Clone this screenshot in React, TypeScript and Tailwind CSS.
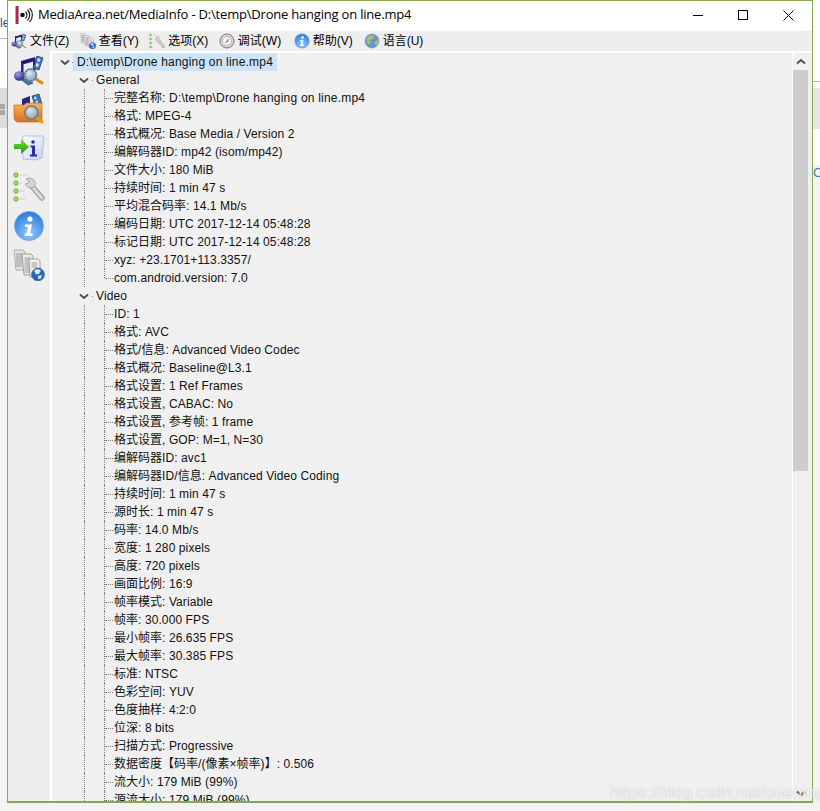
import type { ReactNode } from 'react';

const cjk = '"Liberation Sans", "Noto Sans CJK SC", sans-serif';

function MusicIcon({ size = 32 }: { size?: number }) {
  return (
    <svg width={size} height={size} viewBox="0 0 32 32">
      <defs>
        <radialGradient id="ball" cx="0.35" cy="0.3" r="0.8">
          <stop offset="0" stopColor="#9a9ae8" />
          <stop offset="1" stopColor="#1c1c78" />
        </radialGradient>
        <radialGradient id="lens" cx="0.4" cy="0.35" r="0.7">
          <stop offset="0" stopColor="#dfe9f2" />
          <stop offset="1" stopColor="#7f9fbd" />
        </radialGradient>
      </defs>
      <path d="M8 7l14-4v4L8 11z" fill="#1c1c80" />
      <path d="M8 7h2.500v15H8zM20 4h2.500v12H20z" fill="#23238c" />
      <ellipse cx="6.500" cy="22" rx="5.500" ry="4.800" fill="url(#ball)" />
      <path d="M24 2l6 2-4 12-6-2z" fill="#3f79b8" stroke="#123" strokeWidth="0.6" />
      <path d="M25 4l2.500 1-1 3-2.500-1zM23.500 9l2.500 1-1 3-2.500-1z" fill="#cfe3f5" />
      <path d="M9 26l5-1 6 4-5 2z" fill="#3f79b8" stroke="#123" strokeWidth="0.6" />
      <path d="M23 25l6 4" stroke="#d98a1c" strokeWidth="3" strokeLinecap="round" />
      <circle cx="17.500" cy="21" r="6" fill="url(#lens)" stroke="#6b7f92" strokeWidth="1.600" />
    </svg>
  );
}

function FolderIcon() {
  return (
    <svg width="32" height="32" viewBox="0 0 32 32">
      <defs>
        <linearGradient id="fold" x1="0" y1="0" x2="0" y2="1">
          <stop offset="0" stopColor="#f7b45a" />
          <stop offset="1" stopColor="#d8701a" />
        </linearGradient>
        <radialGradient id="lens2" cx="0.4" cy="0.35" r="0.7">
          <stop offset="0" stopColor="#e6e2d8" />
          <stop offset="1" stopColor="#8ba0b4" />
        </radialGradient>
      </defs>
      <path d="M9 6l8-3v8l-8 3z" fill="#23238c" />
      <path d="M19 3l7-2 3 10-7 2z" fill="#3f79b8" stroke="#123" strokeWidth="0.6" />
      <path d="M21 4l2-.6.7 2.400-2 .6zM22.500 8l2-.6.7 2.400-2 .6z" fill="#cfe3f5" />
      <path d="M1 12h10l2-2h16v16c0 2-1 3-3 3H5c-2 0-4-2-4-4z" fill="url(#fold)" stroke="#b8620f" strokeWidth="0.6" />
      <path d="M24 25l5 4" stroke="#d9a01c" strokeWidth="3" strokeLinecap="round" />
      <circle cx="18.500" cy="19.500" r="6.500" fill="url(#lens2)" stroke="#6b7f92" strokeWidth="1.600" />
    </svg>
  );
}

function SheetIcon() {
  return (
    <svg width="32" height="32" viewBox="0 0 32 32">
      <defs>
        <linearGradient id="sheet" x1="0" y1="0" x2="1" y2="1">
          <stop offset="0" stopColor="#ffffff" />
          <stop offset="1" stopColor="#c3cff0" />
        </linearGradient>
        <linearGradient id="arrow" x1="0" y1="0" x2="0" y2="1">
          <stop offset="0" stopColor="#7fe02a" />
          <stop offset="1" stopColor="#169a16" />
        </linearGradient>
      </defs>
      <path d="M10 4h20l1 1-2 21-6 2-13-1z" fill="url(#sheet)" stroke="#a9b4dc" strokeWidth="0.8" />
      <circle cx="20" cy="10" r="1.800" fill="#1f2fae" />
      <path d="M17.500 13.500h4.500v9h2v2h-7v-2h2v-7h-1.500z" fill="#1f2fae" />
      <path d="M1 12h7V7l8 8-8 7v-5H1z" fill="url(#arrow)" />
    </svg>
  );
}

function ToolIcon({ size = 32 }: { size?: number }) {
  return (
    <svg width={size} height={size} viewBox="0 0 32 32">
      {[4, 12, 20, 28].map((y) => (
        <g key={y}>
          <circle cx="3" cy={y} r="2.200" fill="#a3dc5c" stroke="#5da524" strokeWidth="0.8" />
          <path d={`M7 ${y}h${y === 4 ? 7 : y === 12 ? 3 : 5}`} stroke="#d2d2d2" strokeWidth="1.300" strokeDasharray="2 1" />
        </g>
      ))}
      <path d="M17 13l12 14" stroke="#9a9a9a" strokeWidth="5.500" strokeLinecap="round" />
      <path d="M17 13l12 14" stroke="#dcdcdc" strokeWidth="3" strokeLinecap="round" />
      <path d="M13 8c3-1.500 6-1 8 1 1.500 2 1.500 5 0 7l-3 1c-3 0-5-2-6-4l3-.5 1.500-2.500z" fill="#d6d6d6" stroke="#9a9a9a" strokeWidth="0.8" />
    </svg>
  );
}

function InfoIcon({ size = 32 }: { size?: number }) {
  return (
    <svg width={size} height={size} viewBox="0 0 32 32">
      <defs>
        <radialGradient id="info" cx="0.5" cy="0.75" r="0.75">
          <stop offset="0" stopColor="#8fccff" />
          <stop offset="1" stopColor="#2a78dc" />
        </radialGradient>
      </defs>
      <circle cx="16" cy="16" r="14.500" fill="url(#info)" stroke="#6aa2e6" strokeWidth="0.8" />
      <circle cx="17" cy="9" r="2.600" fill="#ffffff" />
      <path d="M12 14.500h7l-2 9h2.500V26h-8l.5-2.500h1.500l1.500-6.500h-3z" fill="#ffffff" />
    </svg>
  );
}

function DocsIcon({ size = 32 }: { size?: number }) {
  const lines = (x: number, y: number, n: number) =>
    Array.from({ length: n }).map((_, i) => (
      <path key={i} d={`M${x} ${y + i * 2}h6`} stroke="#9a9a9a" strokeWidth="1" />
    ));
  return (
    <svg width={size} height={size} viewBox="0 0 32 32">
      <path d="M1 1h9l2 2v18H3z" fill="#e3e3e3" stroke="#9c9c9c" strokeWidth="0.8" />
      {lines(3, 5, 7)}
      <path d="M9 5h9l2 2v19h-9z" fill="#ececec" stroke="#8c8c8c" strokeWidth="0.8" />
      {lines(11.500, 9, 8)}
      <path d="M16 10h9l2 2v16H17z" fill="#f2f2f2" stroke="#8c8c8c" strokeWidth="0.8" />
      {lines(18.500, 14, 3)}
      <circle cx="25" cy="25.500" r="6.500" fill="#2467b8" stroke="#1f5596" strokeWidth="0.5" />
      <path d="M21 21.500q4-2.500 7 0l-2 3.500-3 .5zM25 27l4-1-1 3.500-3 .5z" fill="#d8e6f2" />
    </svg>
  );
}

function GlobeIcon() {
  return (
    <svg width="16" height="16" viewBox="0 0 32 32">
      <circle cx="16" cy="16" r="14" fill="#5d9ad0" stroke="#7d8a94" strokeWidth="1" />
      <path d="M6 10c4-5 10-6 14-4l-2 6-6 2 2 6-5 3c-3-3-4-8-3-13zM22 16l7-2c1 4 0 8-3 11l-5-3z" fill="#b8b86a" />
    </svg>
  );
}

function DialIcon() {
  return (
    <svg width="16" height="16" viewBox="0 0 16 16">
      <circle cx="8" cy="8" r="7" fill="#d8d8d8" stroke="#777777" strokeWidth="1" />
      <circle cx="8" cy="8" r="4.500" fill="#f4f4f4" stroke="#aaaaaa" strokeWidth="0.7" />
      <path d="M5.500 10.500L8.500 7l2-2-1.500 3.500z" fill="#c8501e" />
    </svg>
  );
}

function TitleIcon() {
  return (
    <svg width="18" height="18" viewBox="0 0 18 18">
      <path d="M0.500 0h1.500v18H0.500z" fill="#d8232a" />
      <path d="M2 0h1.500v18H2z" fill="#2342c8" />
      <circle cx="7.500" cy="9" r="2.300" fill="#111111" />
      <path d="M10.500 5.500a5 5 0 0 1 0 7M12.500 3.500a8 8 0 0 1 0 11M14.500 2a10 10 0 0 1 0 14" fill="none" stroke="#222222" strokeWidth="1.200" />
    </svg>
  );
}

function Chevron({ className }: { className?: string }) {
  return (
    <svg width="10" height="7" viewBox="0 0 10 7" className={className}>
      <path d="M1 1.500l4 3.500 4-3.500" fill="none" stroke="#505050" strokeWidth="2" />
    </svg>
  );
}

function MenuItem({ icon, label, className = '' }: { icon: ReactNode; label: string; className?: string }) {
  return (
    <div className={`flex items-center gap-[3px] h-full ${className}`}>
      <span className="flex w-4 h-4 items-center justify-center">{icon}</span>
      <span>{label}</span>
    </div>
  );
}

// latin runs sit a little wider than Liberation gives them, the CJK runs don't
function Label({ text }: { text: string }) {
  const tracking = text.includes('\\') ? 'tracking-[0.2px]' : 'tracking-[0.1px]';
  return (
    <>
      {text.split(/([\x00-\x7f]+)/).map((part, i) =>
        i % 2 === 1 ? (
          <span key={i} className={tracking}>
            {part}
          </span>
        ) : (
          part
        ),
      )}
    </>
  );
}

const generalRows = [
  '完整名称: D:\\temp\\Drone hanging on line.mp4',
  '格式: MPEG-4',
  '格式概况: Base Media / Version 2',
  '编解码器ID: mp42 (isom/mp42)',
  '文件大小: 180 MiB',
  '持续时间: 1 min 47 s',
  '平均混合码率: 14.1 Mb/s',
  '编码日期: UTC 2017-12-14 05:48:28',
  '标记日期: UTC 2017-12-14 05:48:28',
  'xyz: +23.1701+113.3357/',
  'com.android.version: 7.0',
];

const videoRows = [
  'ID: 1',
  '格式: AVC',
  '格式/信息: Advanced Video Codec',
  '格式概况: Baseline@L3.1',
  '格式设置: 1 Ref Frames',
  '格式设置, CABAC: No',
  '格式设置, 参考帧: 1 frame',
  '格式设置, GOP: M=1, N=30',
  '编解码器ID: avc1',
  '编解码器ID/信息: Advanced Video Coding',
  '持续时间: 1 min 47 s',
  '源时长: 1 min 47 s',
  '码率: 14.0 Mb/s',
  '宽度: 1 280 pixels',
  '高度: 720 pixels',
  '画面比例: 16:9',
  '帧率模式: Variable',
  '帧率: 30.000 FPS',
  '最小帧率: 26.635 FPS',
  '最大帧率: 30.385 FPS',
  '标准: NTSC',
  '色彩空间: YUV',
  '色度抽样: 4:2:0',
  '位深: 8 bits',
  '扫描方式: Progressive',
  '数据密度【码率/(像素×帧率)】: 0.506',
  '流大小: 179 MiB (99%)',
  '源流大小: 179 MiB (99%)',
];

function Leaf({ text, last }: { text: string; last?: boolean }) {
  return (
    <div className="flex h-[18px] shrink-0 items-stretch">
      <span className="ml-[32px] w-px border-l border-dotted border-[#808080]" />
      <span className={`ml-[19px] w-px border-l border-dotted border-[#808080] ${last ? 'h-[9px]' : ''}`} />
      <span className="mt-[9px] w-[8px] h-px border-t border-dotted border-[#808080]" />
      <span className="ml-px leading-[18px] whitespace-pre">
        <Label text={text} />
      </span>
    </div>
  );
}

function Group({ label, rows }: { label: string; rows: string[] }) {
  return (
    <>
      <div className="flex h-[18px] shrink-0 items-center">
        <Chevron className="ml-[27px]" />
        <span className="ml-[3px] w-px h-px bg-[#808080]" />
        <span className="ml-[3px] tracking-[0.1px]">{label}</span>
      </div>
      {rows.map((r, i) => (
        <Leaf key={r + i} text={r} last={i === rows.length - 1 && label === 'General'} />
      ))}
    </>
  );
}

export default function App() {
  return (
    <div className="relative flex w-[820px] h-[811px] overflow-hidden bg-[#f3f3f3]" style={{ fontFamily: cjk }}>
      {/* window behind, left edge */}
      <div className="flex flex-col w-[7px] shrink-0 overflow-hidden">
        <div className="h-[38px] bg-white pt-[15px] text-[12px] leading-4 text-[#1a4f9c]">le</div>
        <div className="h-px bg-[#b8b8b8]" />
        <div className="h-[49px] bg-white" />
        <div className="flex flex-col h-[40px] bg-[#dcdcdc] pt-[16px] gap-px">
          <div className="h-[5px] w-[5px] bg-[#a8a8a8]" />
          <div className="h-[5px] w-[5px] bg-[#a8a8a8]" />
        </div>
      </div>

      <div className="flex flex-col w-[806px] h-[803px] shrink-0 border-x border-t border-b-2 border-[#86a94e] bg-[#eeeeee]">
        {/* title bar */}
        <div className="flex items-center h-[30px] shrink-0 bg-white pl-[7px] pb-[2px]">
          <TitleIcon />
          <span className="ml-[5px] text-[13px] text-black tracking-[-0.2px]" style={{ fontFamily: '"Open Sans", sans-serif' }}>
            MediaArea.net/MediaInfo - D:\temp\Drone hanging on line.mp4
          </span>
          <div className="flex ml-auto items-center">
            <span className="w-[10px] h-px bg-black mr-[35px]" />
            <span className="w-[10px] h-[10px] border border-black mr-[35px]" />
            <svg width="11" height="11" viewBox="0 0 11 11" className="mr-[18px]">
              <path d="M0.500 0.500l10 10M10.500 0.500l-10 10" stroke="#000000" strokeWidth="1" />
            </svg>
          </div>
        </div>

        {/* menu bar */}
        <div className="flex items-center h-[20px] shrink-0 gap-[10.5px] pl-[3px] text-[12px] text-black">
          <MenuItem icon={<MusicIcon size={16} />} label="文件(Z)" />
          <MenuItem icon={<DocsIcon size={16} />} label="查看(Y)" />
          <MenuItem icon={<ToolIcon size={16} />} label="选项(X)" />
          <MenuItem icon={<DialIcon />} label="调试(W)" />
          <MenuItem icon={<InfoIcon size={16} />} label="帮助(V)" className="ml-[2px]" />
          <MenuItem icon={<GlobeIcon />} label="语言(U)" className="ml-[0.5px]" />
        </div>

        <div className="flex flex-1 min-h-0">
          {/* side toolbar */}
          <div className="flex flex-col w-[42px] shrink-0 items-center gap-[7px] pt-[3px] pr-px">
            <MusicIcon />
            <FolderIcon />
            <SheetIcon />
            <ToolIcon />
            <InfoIcon />
            <DocsIcon />
          </div>

          {/* tree */}
          <div className="flex flex-1 min-w-0 border-t-2 border-l-2 border-white bg-[#f0f0f0]">
            <div className="flex flex-col flex-1 min-w-0 overflow-hidden text-[12px] text-[#111111]">
              <div className="flex h-[18px] shrink-0 items-center">
                <Chevron className="ml-[8px]" />
                <span className="ml-[2px] w-px h-px bg-[#808080]" />
                <span className="flex items-center w-[204px] h-[18px] bg-[#cce4f7] pl-[4px] tracking-[0.2px]">
                  D:\temp\Drone hanging on line.mp4
                </span>
              </div>
              <Group label="General" rows={generalRows} />
              <Group label="Video" rows={videoRows} />
            </div>

            {/* scrollbar */}
            <div className="flex flex-col w-[19px] shrink-0 border-l border-white bg-[#f0f0f0] mr-px">
              <div className="flex h-[17px] shrink-0 items-center justify-center pr-[3px]">
                <Chevron className="rotate-180" />
              </div>
              <div className="h-[401px] bg-[#cdcdcd] mr-[3px]" />
              <div className="flex flex-1 items-end justify-center pb-[4px] pr-[3px]">
                <Chevron />
              </div>
            </div>
          </div>
        </div>
      </div>

      {/* window behind, right edge */}
      <div className="flex flex-col flex-1 overflow-hidden">
        <div className="h-[81px] bg-white" />
        <div className="h-px bg-[#b8b8b8]" />
        <div className="h-[6px] bg-white" />
        <div className="h-[41px] bg-[#e6e6e6]" />
        <div className="h-[36px] bg-white" />
        <div className="text-[13px] leading-4 text-[#3a7fc0]">C</div>
      </div>

      <span
        className="absolute left-[610px] top-[783px] text-[16.8px] leading-5 text-white/70 [text-shadow:0_0_2px_#bdbdbd]"
        style={{ fontFamily: '"Liberation Sans", sans-serif' }}
      >
        https://blog.csdn.net/ouening
      </span>
    </div>
  );
}
